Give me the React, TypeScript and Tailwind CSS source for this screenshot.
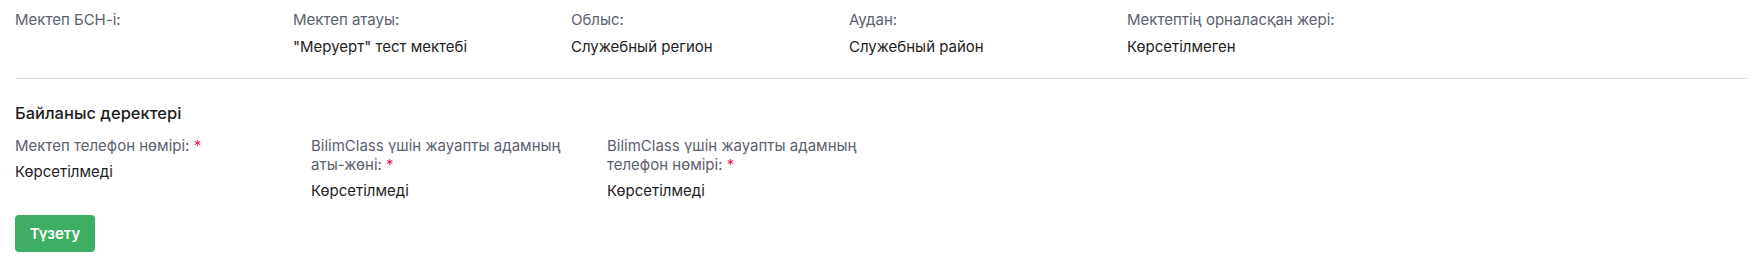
import React from "react";

const top = [
  { label: "Мектеп БСН-і:", value: "" },
  { label: "Мектеп атауы:", value: "\"Меруерт\" тест мектебі" },
  { label: "Облыс:", value: "Служебный регион" },
  { label: "Аудан:", value: "Служебный район" },
  { label: "Мектептің орналасқан жері:", value: "Көрсетілмеген" },
];

const contacts = [
  { label: "Мектеп телефон нөмірі:", value: "Көрсетілмеді" },
  { label: "BilimClass үшін жауапты адамның аты-жөні:", value: "Көрсетілмеді" },
  { label: "BilimClass үшін жауапты адамның телефон нөмірі:", value: "Көрсетілмеді" },
];

export default function App() {
  return (
    <div
      className="w-full bg-white px-[15px] pt-[10px] text-[15px] leading-[19px]"
      style={{ fontFamily: "Inter, 'Noto Sans', sans-serif" }}
    >
      <div className="grid grid-cols-[repeat(5,278px)]">
        {top.map((f) => (
          <div key={f.label} className="flex flex-col gap-[8px]">
            <div className="text-[#5b616e]">{f.label}</div>
            <div className="min-h-[19px] text-[#1e1e1e]">{f.value}</div>
          </div>
        ))}
      </div>
      <div className="mt-[22px] mr-[-3px] h-px bg-[#dce2e9]" />
      <div className="mt-[23px] text-[16.5px] font-medium leading-[22px] text-[#1e1e1e]">
        Байланыс деректері
      </div>
      <div className="mt-[12px] grid grid-cols-[repeat(3,296px)]">
        {contacts.map((f) => (
          <div key={f.label} className="flex w-[268px] flex-col gap-[7px]">
            <div className="text-[#5b616e]">
              {f.label} <span className="text-[#e8195f]">*</span>
            </div>
            <div className="text-[#1e1e1e]">{f.value}</div>
          </div>
        ))}
      </div>
      <button className="mt-[15px] h-[37px] w-[80px] rounded-[4px] bg-[#3dae62] text-[15px] font-semibold text-white">
        Түзету
      </button>
    </div>
  );
}
